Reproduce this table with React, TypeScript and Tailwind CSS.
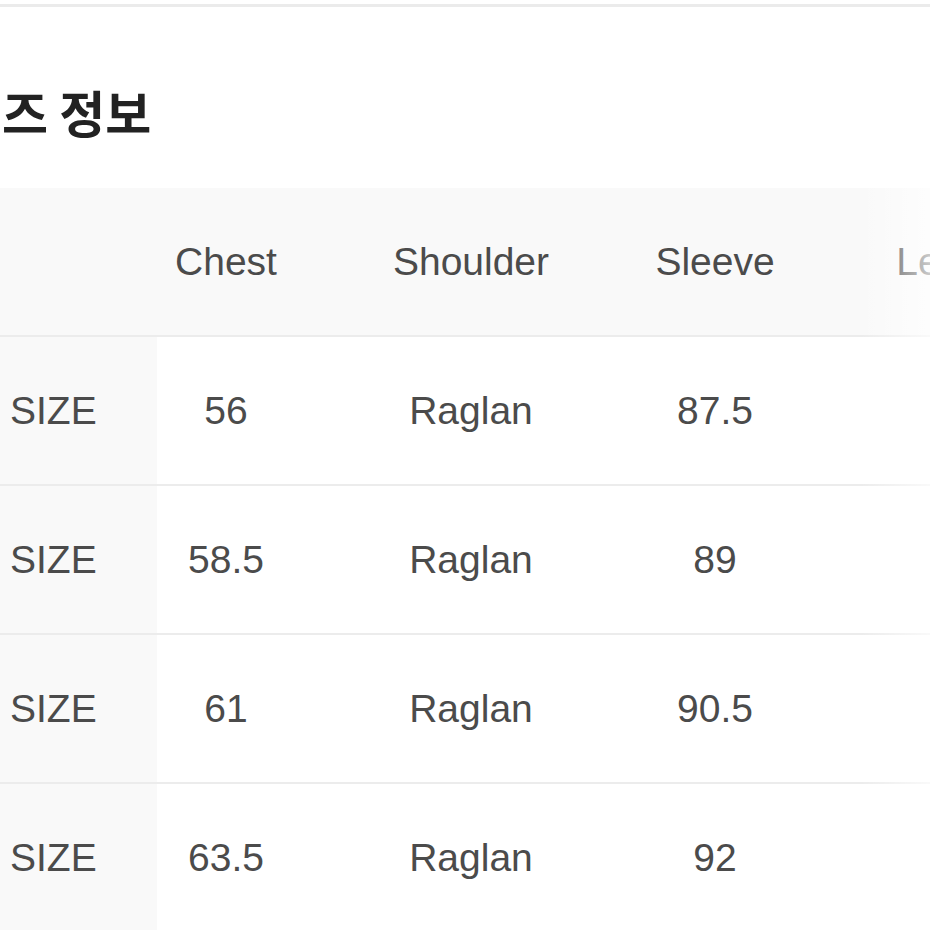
import React from 'react';

interface SizeRow {
  label: string;
  chest: string;
  shoulder: string;
  sleeve: string;
  length: string;
}

const rows: SizeRow[] = [
  { label: "SIZE", chest: "56", shoulder: "Raglan", sleeve: "87.5", length: "" },
  { label: "SIZE", chest: "58.5", shoulder: "Raglan", sleeve: "89", length: "" },
  { label: "SIZE", chest: "61", shoulder: "Raglan", sleeve: "90.5", length: "" },
  { label: "SIZE", chest: "63.5", shoulder: "Raglan", sleeve: "92", length: "" },
];

const App: React.FC = () => {
  return (
    <div className="w-[930px] h-[930px] overflow-hidden bg-white relative font-['Liberation_Sans','Noto_Sans_CJK_KR',sans-serif]">
      {/* top divider */}
      <div className="h-[4px]" />
      <div className="h-[3px] bg-[#ebebeb]" />

      <h2 className="mt-[74px] mb-[47px] pl-[2px] h-[60px] leading-[60px] text-[50px] font-bold text-[#222] font-['Noto_Sans_CJK_KR',sans-serif] whitespace-nowrap">
        즈 정보
      </h2>

      <div className="relative w-[1200px] text-[39px] text-[#4b4b4b]">
        {/* header */}
        <div className="flex h-[149px] bg-[#f9f9f9] border-b-2 border-[#ececec]">
          <div className="w-[157px] shrink-0" />
          <div className="w-[138px] shrink-0 flex items-center justify-center pt-[2px]">Chest</div>
          <div className="w-[352px] shrink-0 flex items-center justify-center pt-[2px]">Shoulder</div>
          <div className="w-[136px] shrink-0 flex items-center justify-center pt-[2px]">Sleeve</div>
          <div className="w-[346px] shrink-0 flex items-center justify-center pt-[2px]">Length</div>
        </div>

        {rows.map((row, i) => (
          <div key={i} className="flex h-[149px] border-b-2 border-[#ececec]">
            <div className="w-[157px] shrink-0 bg-[#f9f9f9] flex items-center pl-[10px] pt-[2px]">{row.label}</div>
            <div className="w-[138px] shrink-0 flex items-center justify-center pt-[2px]">{row.chest}</div>
            <div className="w-[352px] shrink-0 flex items-center justify-center pt-[2px]">{row.shoulder}</div>
            <div className="w-[136px] shrink-0 flex items-center justify-center pt-[2px]">{row.sleeve}</div>
            <div className="w-[346px] shrink-0 flex items-center justify-center pt-[2px]">{row.length}</div>
          </div>
        ))}

        {/* right fade over the scrolled table */}
        <div className="absolute top-0 bottom-0 left-[860px] w-[70px] bg-gradient-to-r from-white/0 to-white/70 pointer-events-none" />
      </div>
    </div>
  );
};

export default App;
